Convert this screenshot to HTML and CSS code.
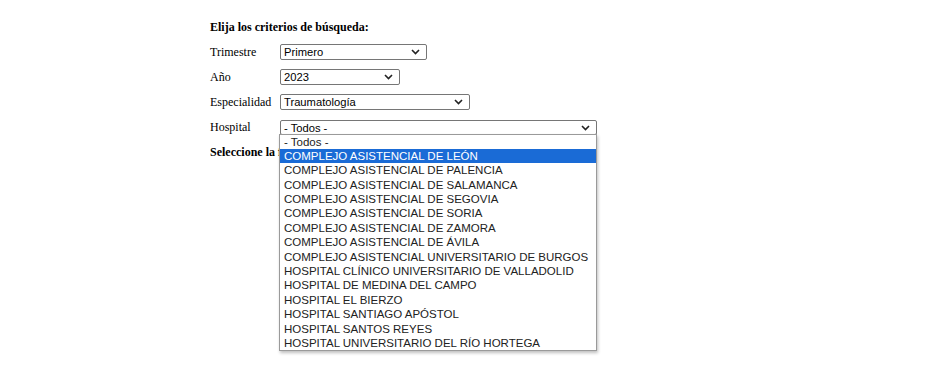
FILE: index.html
```html
<!DOCTYPE html>
<html lang="es">
<head>
<meta charset="utf-8">
<title>Búsqueda</title>
<link rel="stylesheet" href="styles.css">
</head>
<body>
<div class="form">
  <div class="title">Elija los criterios de búsqueda:</div>
  <div class="row">
    <span class="label">Trimestre</span>
    <div class="select w-tri"><span class="val">Primero</span><svg class="chev" width="9" height="6" viewBox="0 0 9 6"><path d="M1 1l3.5 3.5L8 1" fill="none" stroke="#222" stroke-width="1.6"/></svg></div>
  </div>
  <div class="row">
    <span class="label">Año</span>
    <div class="select w-ano"><span class="val">2023</span><svg class="chev" width="9" height="6" viewBox="0 0 9 6"><path d="M1 1l3.5 3.5L8 1" fill="none" stroke="#222" stroke-width="1.6"/></svg></div>
  </div>
  <div class="row">
    <span class="label">Especialidad</span>
    <div class="select w-esp"><span class="val">Traumatología</span><svg class="chev" width="9" height="6" viewBox="0 0 9 6"><path d="M1 1l3.5 3.5L8 1" fill="none" stroke="#222" stroke-width="1.6"/></svg></div>
  </div>
  <div class="row">
    <span class="label">Hospital</span>
    <div class="select w-hos"><span class="val">- Todos -</span><svg class="chev" width="9" height="6" viewBox="0 0 9 6"><path d="M1 1l3.5 3.5L8 1" fill="none" stroke="#222" stroke-width="1.6"/></svg>
      <ul class="list">
        <li>- Todos -</li>
        <li class="sel">COMPLEJO ASISTENCIAL DE LEÓN</li>
        <li>COMPLEJO ASISTENCIAL DE PALENCIA</li>
        <li>COMPLEJO ASISTENCIAL DE SALAMANCA</li>
        <li>COMPLEJO ASISTENCIAL DE SEGOVIA</li>
        <li>COMPLEJO ASISTENCIAL DE SORIA</li>
        <li>COMPLEJO ASISTENCIAL DE ZAMORA</li>
        <li>COMPLEJO ASISTENCIAL DE ÁVILA</li>
        <li>COMPLEJO ASISTENCIAL UNIVERSITARIO DE BURGOS</li>
        <li>HOSPITAL CLÍNICO UNIVERSITARIO DE VALLADOLID</li>
        <li>HOSPITAL DE MEDINA DEL CAMPO</li>
        <li>HOSPITAL EL BIERZO</li>
        <li>HOSPITAL SANTIAGO APÓSTOL</li>
        <li>HOSPITAL SANTOS REYES</li>
        <li>HOSPITAL UNIVERSITARIO DEL RÍO HORTEGA</li>
      </ul>
    </div>
  </div>
  <div class="title next">Seleccione la fecha:</div>
</div>
</body>
</html>
```
FILE: styles.css
```css
html, body {
  margin: 0;
  padding: 0;
  background: #fff;
}
body {
  font-family: "Liberation Serif", "Times New Roman", serif;
  font-size: 12px;
  color: #000;
}
.form {
  box-sizing: border-box;
  min-height: 372px;
  padding: 20px 0 0 210px;
}
.title {
  font-weight: bold;
  height: 15px;
  line-height: 15px;
  margin-bottom: 9px;
}
.title.next {
  margin-top: 10px;
}
.row {
  display: flex;
  align-items: center;
  height: 16px;
  margin-bottom: 9px;
}
.label {
  width: 70px;
  flex: none;
  line-height: 16px;
}
.select {
  position: relative;
  box-sizing: border-box;
  height: 16px;
  border: 1px solid #767676;
  border-radius: 2px;
  background: #fff;
  font-family: "Liberation Sans", Arial, sans-serif;
  font-size: 11.2px;
  color: #000;
}
.select .val {
  display: block;
  padding-left: 3px;
  line-height: 14px;
  white-space: nowrap;
}
.select .chev {
  position: absolute;
  right: 6px;
  top: 4px;
}
.w-tri { width: 147px; }
.w-ano { width: 120px; }
.w-esp { width: 190px; }
.w-hos { width: 317px; height: 15px; }
.list {
  position: absolute;
  left: -2px;
  top: 13px;
  width: 318px;
  box-sizing: border-box;
  margin: 0;
  padding: 0;
  list-style: none;
  background: #fff;
  border: 1px solid #9a9a9a;
  box-shadow: 1px 2px 3px rgba(0, 0, 0, 0.25);
  z-index: 5;
  font-size: 11.5px;
}
.list li {
  height: 14.4px;
  line-height: 14.4px;
  padding-left: 4px;
  white-space: nowrap;
  color: #222;
}
.list li.sel {
  background: #1a6bd6;
  color: #fff;
}
```
